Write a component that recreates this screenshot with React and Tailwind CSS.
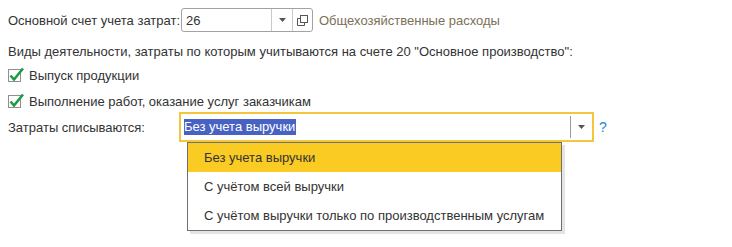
import React from "react";

const Arrow = () => (
  <svg width="7" height="4" viewBox="0 0 7 4">
    <path d="M0 0h7L3.5 4z" fill="#555" />
  </svg>
);

const OpenIcon = () => (
  <svg width="11" height="11" viewBox="0 0 11 11" fill="none" stroke="#555" strokeWidth="1">
    <rect x="3.5" y="0.5" width="7" height="7" />
    <path d="M3.5 3.5H0.5v7h7v-3" />
  </svg>
);

const Check = () => (
  <div className="relative w-[13px] h-[13px] border border-[#8f8f8f] bg-white shrink-0">
    <svg className="absolute -top-[3px] -left-[1px]" width="17" height="16" viewBox="0 0 17 16">
      <path d="M2.5 8.5l3.5 4L15 1.5" fill="none" stroke="#1f9a45" strokeWidth="2.6" />
    </svg>
  </div>
);

const options = [
  "Без учета выручки",
  "С учётом всей выручки",
  "С учётом выручки только по производственным услугам",
];

export default function App() {
  return (
    <div className="w-[732px] h-[247px] bg-white pl-[8px] pt-[8px] text-[13px] text-[#333] font-['Liberation_Sans',Arial,sans-serif] leading-none">
      <div className="flex items-center h-[24px]">
        <span className="w-[173px]">Основной счет учета затрат:</span>
        <div className="flex h-[24px] w-[132px] border border-[#a3a3a3] rounded-[3px] bg-white">
          <div className="flex-1 flex items-center pl-[4px] text-[#333]">26</div>
          <div className="w-[21px] border-l border-[#c8c8c8] flex items-center justify-center">
            <Arrow />
          </div>
          <div className="w-[20px] border-l border-[#c8c8c8] flex items-center justify-center">
            <OpenIcon />
          </div>
        </div>
        <span className="ml-[6px] text-[#7b6f58]">Общехозяйственные расходы</span>
      </div>

      <div className="flex items-center h-[18px] mt-[10px]">
        Виды деятельности, затраты по которым учитываются на счете 20 "Основное производство":
      </div>

      <div className="flex items-center h-[18px] mt-[6px] gap-[8px] pl-[-1px]">
        <Check />
        <span>Выпуск продукции</span>
      </div>

      <div className="flex items-center h-[18px] mt-[8px] gap-[8px]">
        <Check />
        <span>Выполнение работ, оказание услуг заказчикам</span>
      </div>

      <div className="flex items-center h-[30px] mt-[2px]">
        <span className="w-[171px]">Затраты списываются:</span>
        <div className="relative">
          <div className="flex h-[30px] w-[415px] border-2 border-[#f2c73c] bg-white">
            <div className="flex-1 flex items-center pl-[3px]">
              <span className="bg-[#4862c4] text-white leading-[16px] pr-[1px]">Без учета выручки</span>
            </div>
            <div className="w-[22px] my-[2px] border-l border-[#9a9a9a] flex items-center justify-center">
              <Arrow />
            </div>
          </div>
          <div className="absolute top-[30px] left-[8px] w-[375px] bg-white border border-[#6f6f6f] shadow-[3px_3px_0_#e4e4e4]">
            {options.map((o, i) => (
              <div
                key={o}
                className={`h-[29px] flex items-center pl-[16px] ${i === 0 ? "bg-[#f9cb23]" : ""}`}
              >
                {o}
              </div>
            ))}
          </div>
        </div>
        <span className="ml-[5px] text-[#2b86c9] text-[14px]">?</span>
      </div>
    </div>
  );
}
